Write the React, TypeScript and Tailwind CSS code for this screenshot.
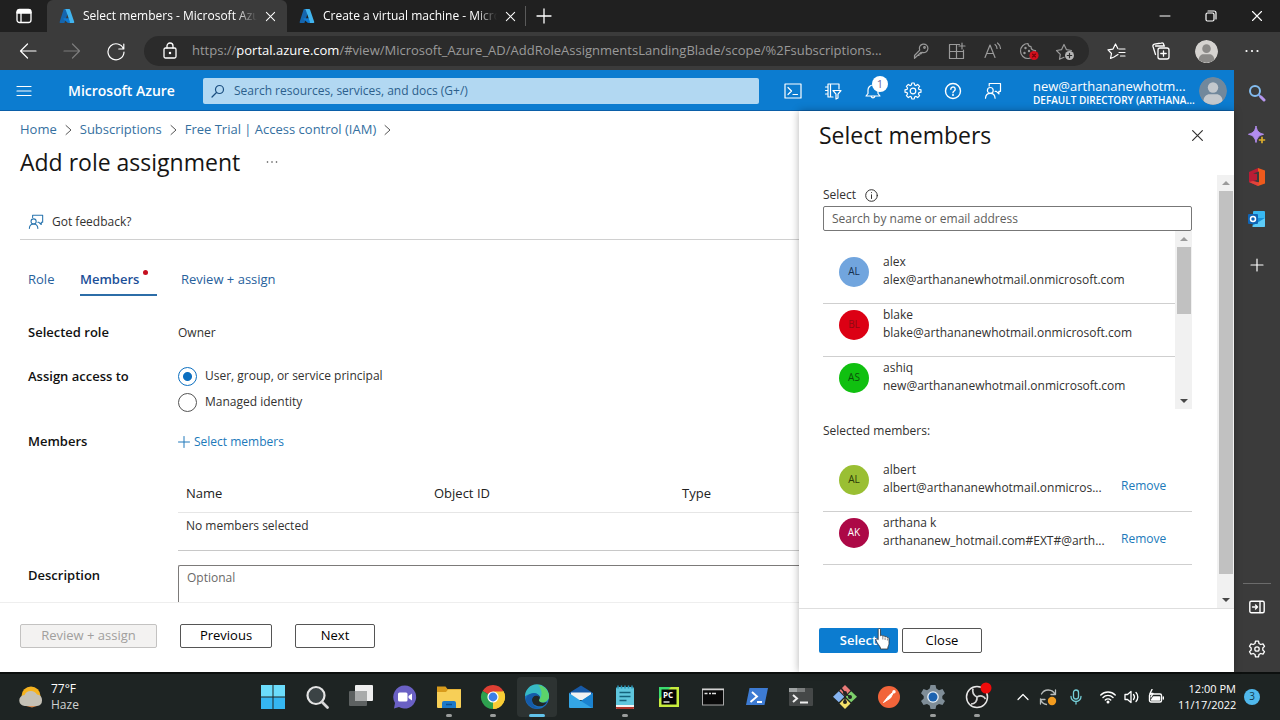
import type { ReactNode } from "react";

type IconProps = { children: ReactNode; className?: string; box?: string; sw?: number };

function Ic({ children, className = "size-5", box = "0 0 20 20", sw = 1.2 }: IconProps) {
  return (
    <svg className={`shrink-0 ${className}`} viewBox={box} fill="none" stroke="currentColor" strokeWidth={sw} strokeLinecap="round" strokeLinejoin="round" aria-hidden="true">
      {children}
    </svg>
  );
}

function AzureLogo() {
  return (
    <svg className="size-4 shrink-0" viewBox="0 0 16 16" aria-hidden="true">
      <path d="M5.4 1h4.8L5.4 15H1.6a.9.9 0 0 1-.9-1.2L4.6 1.6A.9.9 0 0 1 5.4 1z" fill="#1565ad" />
      <path d="M4.6 10.2h7l1.2 4.4L9 15 4.2 11z" fill="#0f78d0" />
      <path d="M5.8 1h4.4a.9.9 0 0 1 .8.6l4.2 12.2a.9.9 0 0 1-.9 1.2h-4.2a.9.9 0 0 0 .8-1.2L6.6 1.6A.9.9 0 0 0 5.8 1z" fill="#41b4ee" />
    </svg>
  );
}

function Cross({ className = "size-3" }: { className?: string }) {
  return (
    <Ic className={className} box="0 0 12 12" sw={1.1}>
      <path d="M1.5 1.5l9 9M10.5 1.5l-9 9" />
    </Ic>
  );
}

function Feedback({ className = "size-[18px]" }: { className?: string }) {
  return (
    <Ic className={className} box="0 0 18 18" sw={1.2}>
      <circle cx="6.3" cy="8.4" r="2.9" />
      <path d="M1.5 16.2c.2-3 2.1-4.9 4.8-4.9s4.600 1.900 4.800 4.900" />
      <path d="M5.200 4V1.500h11.300v7.800h-1.600v2.600L12.300 9.300h-1.200" />
    </Ic>
  );
}

function Person({ className, bg, fg }: { className: string; bg: string; fg: string }) {
  return (
    <svg className={`shrink-0 rounded-full ${className}`} viewBox="0 0 28 28" aria-hidden="true">
      <circle cx="14" cy="14" r="14" fill={bg} />
      <circle cx="14" cy="10.500" r="5.200" fill={fg} />
      <path d="M4.500 24c0-4.500 3-6.800 6-6.800h7c3 0 6 2.300 6 6.800a14 14 0 0 1-19 0z" fill={fg} />
    </svg>
  );
}

function Tri({ up = false, dark = false }: { up?: boolean; dark?: boolean }) {
  return (
    <svg className="size-2 shrink-0" viewBox="0 0 8 8" aria-hidden="true">
      <path d={up ? "M0 6l4-4 4 4z" : "M0 2l4 4 4-4z"} fill={dark ? "#484848" : "#9b9b9b"} />
    </svg>
  );
}

function BrowserTab({ title, active }: { title: string; active?: boolean }) {
  return (
    <div className={`flex h-8 items-center pl-3 ${active ? "w-60 rounded-t-md bg-[#3b3b3b]" : "w-[238px]"}`}>
      <AzureLogo />
      <span className="ml-2 w-[174px] overflow-hidden whitespace-nowrap text-xs text-white [mask-image:linear-gradient(to_right,black_88%,transparent)]">{title}</span>
      <button aria-label="Close tab" className="ml-2 text-white"><Cross className="size-[11px]" /></button>
    </div>
  );
}

function TabStrip() {
  return (
    <div className="flex h-8 shrink-0 items-center bg-[#202020] text-white">
      <button aria-label="Tab actions" className="flex w-[47px] justify-center">
        <Ic className="size-4" box="0 0 16 16" sw={1.300}>
          <rect x="1" y="1.500" width="14" height="13" rx="2.500" />
          <path d="M1.500 4.500h13M2 2.800h12" strokeWidth="2.400" />
          <path d="M5 5v9" />
        </Ic>
      </button>
      <BrowserTab title="Select members - Microsoft Azure" active />
      <BrowserTab title="Create a virtual machine - Microsoft Azure" />
      <div className="h-5 w-px bg-[#5a5a5a]" />
      <button aria-label="New tab" className="ml-[10px]">
        <Ic className="size-4" box="0 0 16 16" sw={1.300}><path d="M8 1v14M1 8h14" /></Ic>
      </button>
      <div className="ml-auto flex items-center gap-[34px] pr-[17px]">
        <button aria-label="Minimize"><Ic className="size-3" box="0 0 12 12" sw={1}><path d="M1 6h10" /></Ic></button>
        <button aria-label="Restore">
          <Ic className="size-3" box="0 0 12 12" sw={1.200}>
            <rect x="1" y="3" width="8" height="8" rx="1.500" />
            <path d="M3 1h6a2 2 0 0 1 2 2v6" />
          </Ic>
        </button>
        <button aria-label="Close window"><Cross /></button>
      </div>
    </div>
  );
}

function AddressBar() {
  return (
    <div className="flex h-[38px] shrink-0 items-center bg-[#3b3b3b] text-white">
      <div className="flex w-36 items-center gap-6 pl-[18px]">
        <button aria-label="Back"><Ic><path d="M18 10H2.500M9.500 3l-7 7 7 7" /></Ic></button>
        <button aria-label="Forward" className="text-[#7d7d7d]"><Ic><path d="M2 10h15.500M10.500 3l7 7-7 7" /></Ic></button>
        <button aria-label="Refresh"><Ic><path d="M17.500 8A8 8 0 1 0 18 11M17.800 3v5h-5" /></Ic></button>
      </div>
      <div className="flex h-[30px] min-w-0 flex-1 items-center rounded-full bg-[#2b2b2b] pr-[14px] pl-4 text-[#9a9a9a]">
        <Ic className="size-5 text-white" sw={1.300}>
          <rect x="4" y="7" width="12" height="10" rx="1.500" />
          <path d="M7 7V5a3 3 0 0 1 6 0v2" />
          <circle cx="10" cy="12" r=".6" fill="currentColor" />
        </Ic>
        <span className="ml-3 min-w-0 flex-1 truncate text-[13px]">
          https://<span className="text-white">portal.azure.com</span>/#view/Microsoft_Azure_AD/AddRoleAssignmentsLandingBlade/scope/%2Fsubscriptions...
        </span>
        <div className="ml-3 flex items-center gap-4">
          <Ic>
            <path d="M10.200 11.300l-6.700 6v-2.800l5.200-5.400a4.300 4.300 0 1 1 2.500 2.300L9.700 13H8v1.500H6.500" /><circle cx="13.500" cy="6.500" r=".8" />
          </Ic>
          <Ic><path d="M2.500 3.500h7v14h-7zM2.500 10.500h14v7h-14M16.500 10.500v7M9.500 3.500h3M16.500 10.500V9M15 2v6M12 5h6" /></Ic>
          <Ic><path d="M2 16.500L7 4l5 12.500M3.800 12.500h6.400M12 3.500c1.500 1.200 2 2.500 2 4M14.500 2c2.200 1.700 3 3.600 3 5.500" /></Ic>
          <Ic>
            <path d="M16.500 9.500A7.500 7.500 0 1 1 9 2.500c0 2 1 3 3 3 0 2.500 2 4 4.500 4z" />
            <circle cx="6.500" cy="7" r=".6" /><circle cx="5.500" cy="12" r=".6" /><circle cx="10" cy="10" r=".6" />
            <circle cx="15" cy="14.500" r="4.600" fill="#d0101c" stroke="none" />
            <path d="M13.600 13.100l2.800 2.800M16.400 13.100l-2.800 2.800" stroke="#6b0008" />
          </Ic>
          <Ic>
            <path d="M9 16.300l-4.500 2 .8-5L1.500 9.500l5-.8L9 3.500l2.500 5.200 5 .8" />
            <circle cx="14.500" cy="14.500" r="4.500" fill="#b5b5b5" stroke="none" />
            <path d="M14.500 12.300v4.400M12.300 14.500h4.400" stroke="#2b2b2b" />
          </Ic>
        </div>
      </div>
      <div className="flex items-center gap-6 pr-5 pl-[18px]">
        <Ic><path d="M11 13.500L7 16l-3.500 1.500L4.500 12.500 1 8.800l5-.7L8.500 3l2.300 4.500M12 8h6M12 11.500h6M13.500 15H18" /></Ic>
        <Ic sw={1.300}>
          <rect x="7" y="7" width="11" height="11" rx="2" />
          <path d="M12.500 9.800v5.400M9.800 12.500h5.400M4.500 13.500L2 5.500a2 2 0 0 1 1.400-2.400L10.500 2a2 2 0 0 1 2.300 1.500v.8M4.500 5h9" />
        </Ic>
        <Person className="size-[23px]" bg="#d5d3d0" fg="#8b8a88" />
        <button aria-label="Browser menu" className="ml-[2px]">
          <svg className="size-4" viewBox="0 0 16 16" fill="currentColor"><circle cx="2.500" cy="8" r="1.100" /><circle cx="8" cy="8" r="1.100" /><circle cx="13.500" cy="8" r="1.100" /></svg>
        </button>
      </div>
    </div>
  );
}

function AzureHeader() {
  return (
    <header className="flex h-[41px] shrink-0 items-center border-b border-[#0b5fa8] bg-[#0c7cd0] pt-[2px] text-white">
      <button aria-label="Show portal menu" className="ml-4"><Ic className="size-4" box="0 0 16 16" sw={1.200}><path d="M1 3.500h14M1 8h14M1 12.500h14" /></Ic></button>
      <a href="#" className="ml-9 w-[135px] text-sm font-semibold whitespace-nowrap">Microsoft Azure</a>
      <label className="flex h-[26px] min-w-0 flex-1 items-center gap-[9px] rounded-xs bg-[#b2d8f2] px-2 text-[#1b4f80]">
        <Ic className="size-[14px]" box="0 0 14 14"><circle cx="8.500" cy="5.500" r="4" /><path d="M5.500 8.500L1 13" /></Ic>
        <input aria-label="Search resources, services, and docs" placeholder="Search resources, services, and docs (G+/)" className="min-w-0 flex-1 bg-transparent text-xs outline-none placeholder:text-[#2c5f8c]" />
      </label>
      <div className="ml-[25px] flex items-center gap-[22px]">
        <button aria-label="Cloud Shell"><Ic className="size-[18px]" box="0 0 18 18"><rect x="1" y="2" width="16" height="14" /><path d="M4 5.500L7.500 9 4 12.500M9 12.500h4.500" /></Ic></button>
        <button aria-label="Directories and subscriptions"><Ic className="size-[18px]" box="0 0 18 18"><path d="M9 15H4V2h11v5M6.500 2v13M1.500 5H4M1.500 8.500H4M1.500 12H4M9 8.500h8l-3 3.700V16l-2 1v-4.800z" /></Ic></button>
        <button aria-label="Notifications" className="relative">
          <Ic className="size-[18px]" box="0 0 18 18"><path d="M2 14h14l-2-2.500V8A5 5 0 0 0 4 8v3.500zM7.200 14.500a1.900 1.900 0 0 0 3.600 0" /></Ic>
          <span className="absolute -top-[6px] left-2 flex size-4 items-center justify-center rounded-full bg-white text-[11px] text-[#70629a]">1</span>
        </button>
        <button aria-label="Settings">
          <Ic className="size-[18px]" box="0 0 18 18">
            <circle cx="9" cy="9" r="2.800" />
            <path d="M7.800 1h2.400l.4 2 1.400.6L13.700 2.400l1.900 1.900L14.400 6l.6 1.400 2 .4v2.400l-2 .4-.6 1.400 1.200 1.700-1.900 1.900-1.700-1.200-1.400.6-.4 2H7.800l-.4-2L6 14.400l-1.700 1.200-1.900-1.900L3.600 12 3 10.600l-2-.4V7.800l2-.4L3.600 6 2.400 4.300l1.900-1.900L6 3.600 7.400 3z" />
          </Ic>
        </button>
        <button aria-label="Help"><Ic className="size-[18px]" box="0 0 18 18" sw={1.400}><circle cx="9" cy="9" r="7.500" /><path d="M6.800 7.200a2.200 2.200 0 1 1 3.400 1.800c-.8.500-1.200.9-1.200 1.800" /><circle cx="9" cy="13" r=".4" /></Ic></button>
        <button aria-label="Feedback"><Feedback /></button>
      </div>
      <button className="ml-[31px] flex items-center gap-2 pr-[7px] text-left">
        <span className="w-[158px] pt-1 leading-[14px] whitespace-nowrap">
          <span className="block text-[13px]">new@arthananewhotm...</span>
          <span className="block text-[10px] font-semibold">DEFAULT DIRECTORY (ARTHANA...</span>
        </span>
        <Person className="size-7" bg="#71889c" fg="#c3c8cd" />
      </button>
    </header>
  );
}

function Breadcrumb() {
  const chevron = <Ic className="h-3 w-[7px] text-[#555]" box="0 0 7 12" sw={1}><path d="M1 1.500L6 6l-5 4.500" /></Ic>;
  return (
    <nav className="flex h-5 items-center gap-2 text-[13px] whitespace-nowrap text-[#35709f]">
      <a href="#">Home</a>{chevron}
      <a href="#">Subscriptions</a>{chevron}
      <a href="#">Free Trial | Access control (IAM)</a>{chevron}
    </nav>
  );
}

function MainArea() {
  return (
    <main className="flex min-w-0 flex-1 flex-col overflow-hidden text-xs text-[#323130]">
      <div className="min-h-0 flex-1 overflow-hidden pt-[9px] pl-5">
        <Breadcrumb />
        <div className="mt-1 flex h-9 items-center gap-6">
          <h1 className="text-[23px] font-medium whitespace-nowrap text-[#161514]">Add role assignment</h1>
          <button aria-label="More actions">
            <svg className="h-1 w-4" viewBox="0 0 16 4" fill="#444"><circle cx="3.500" cy="2" r=".8" /><circle cx="8" cy="2" r=".8" /><circle cx="12.500" cy="2" r=".8" /></svg>
          </button>
        </div>
        <div className="mt-6 flex h-9 items-center border-b border-[#d0d0d0] pl-2">
          <button className="flex items-center gap-2"><Feedback className="size-4 text-[#2874ae]" />Got feedback?</button>
        </div>
        <div role="tablist" className="mt-6 flex h-8 gap-6 pl-2 text-[13px] text-[#27619c]">
          <button role="tab" className="w-7 text-left">Role</button>
          <button role="tab" aria-selected="true" className="flex w-[77px] items-center border-b-2 border-[#2c6da8] pt-[2px] font-semibold text-[#1c4f98]">
            Members<span className="mb-4 ml-1 size-[5px] rounded-full bg-[#c50f1f]" />
          </button>
          <button role="tab">Review + assign</button>
        </div>
        <div className="flex flex-col pl-2">
          <div className="mt-[27px] flex h-5 items-center">
            <span className="w-[150px] text-[13px] font-semibold text-[#111]">Selected role</span>
            <span>Owner</span>
          </div>
          <fieldset className="mt-5 flex items-start">
            <legend className="float-left w-[150px] text-[13px] leading-[26px] font-semibold text-[#111]">Assign access to</legend>
            <div>
              {["User, group, or service principal", "Managed identity"].map((t, i) => (
                <label key={t} className="flex h-[26px] items-center gap-2">
                  <input type="radio" name="access" defaultChecked={i === 0} className="size-[19px] appearance-none rounded-full border border-[#555] bg-white checked:border-[#0c6fc0] checked:bg-[radial-gradient(circle,#0c6fc0_4px,transparent_5px)]" />
                  {t}
                </label>
              ))}
            </div>
          </fieldset>
          <div className="mt-[17px] flex h-5 items-center">
            <span className="w-[150px] text-[13px] font-semibold text-[#111]">Members</span>
            <a href="#" className="flex items-center gap-1 text-[#2079ba]">
              <Ic className="size-3" box="0 0 12 12" sw={1}><path d="M6 .5v11M.5 6h11" /></Ic>Select members
            </a>
          </div>
          <div className="mt-6 ml-[150px]">
            <table className="w-full table-fixed border-collapse text-left">
              <thead>
                <tr className="h-9 border-b border-[#e6e6e6] text-[13px] text-[#222]">
                  <th className="w-[248px] pl-2 font-medium">Name</th>
                  <th className="w-[248px] pl-2 font-medium">Object ID</th>
                  <th className="pl-2 font-medium">Type</th>
                </tr>
              </thead>
              <tbody>
                <tr className="h-[38px] border-b border-[#c8c8c8]"><td colSpan={3} className="pb-[10px] pl-2">No members selected</td></tr>
              </tbody>
            </table>
          </div>
          <div className="mt-[14px] flex items-start">
            <label htmlFor="description" className="w-[150px] text-[13px] leading-5 font-semibold text-[#111]">Description</label>
            <textarea id="description" placeholder="Optional" className="h-20 min-w-0 flex-1 resize-none rounded-l-xs border border-r-0 border-[#7c7a79] px-2 py-1 placeholder:text-[#6a6968]" />
          </div>
        </div>
      </div>
      <div className="flex h-[70px] shrink-0 items-center gap-[23px] border-t border-[#eeeeee] bg-white pb-1 pl-5 text-[13px] text-black">
        <button disabled className="h-6 w-[137px] rounded-xs border border-[#c3c2c1] bg-[#f3f2f1] text-[#a19f9d]">Review + assign</button>
        <button className="h-6 w-[92px] rounded-xs border border-[#555]">Previous</button>
        <button className="h-6 w-20 rounded-xs border border-[#555]">Next</button>
      </div>
    </main>
  );
}

type Member = { initials: string; name: string; mail: string; tone: string };

const candidates: Member[] = [
  { initials: "AL", name: "alex", mail: "alex@arthananewhotmail.onmicrosoft.com", tone: "bg-[#71a5de] text-[#15304f]" },
  { initials: "BL", name: "blake", mail: "blake@arthananewhotmail.onmicrosoft.com", tone: "bg-[#dc0014] text-[#8c0b12]" },
  { initials: "AS", name: "ashiq", mail: "new@arthananewhotmail.onmicrosoft.com", tone: "bg-[#10c010] text-[#0b500b]" },
];

const selected: Member[] = [
  { initials: "AL", name: "albert", mail: "albert@arthananewhotmail.onmicros...", tone: "bg-[#9abf33] text-[#2c3b08]" },
  { initials: "AK", name: "arthana k", mail: "arthananew_hotmail.com#EXT#@arth...", tone: "bg-[#ac0846] text-white" },
];

function MemberRow({ m, removable }: { m: Member; removable?: boolean }) {
  return (
    <li className="flex h-[53px] shrink-0 items-start border-b border-[#cfcfcf] pt-[6px] pl-4">
      <span className={`flex size-[30px] shrink-0 items-center justify-center rounded-full text-[10px] ${m.tone}`}>{m.initials}</span>
      <span className={`-mt-1 ml-[14px] leading-[18px] whitespace-nowrap ${removable ? "w-[238px]" : ""}`}>
        <span className="block">{m.name}</span>
        <span className="block">{m.mail}</span>
      </span>
      {removable && <a href="#" className="mt-3 leading-[18px] text-[#2079ba]">Remove</a>}
    </li>
  );
}

function MembersPanel() {
  return (
    <aside aria-label="Select members" className="z-10 flex w-[435px] shrink-0 flex-col bg-white text-xs text-[#323130] shadow-[0_0_8px_rgba(0,0,0,0.3)]">
      <div className="flex h-16 shrink-0 items-start justify-between pt-2 pr-[30px] pl-5">
        <h2 className="text-[23px] leading-8 font-medium text-[#161514]">Select members</h2>
        <button aria-label="Close panel" className="mt-[10px]"><Cross className="size-[13px]" /></button>
      </div>
      <div className="flex min-h-0 flex-1">
        <div className="min-w-0 flex-1 pr-[25px] pl-6">
          <label htmlFor="member-search" className="mt-[10px] flex h-5 items-center gap-[9px]">
            Select
            <Ic className="size-[13px]" box="0 0 13 13" sw={1}><circle cx="6.500" cy="6.500" r="5.800" /><path d="M6.500 5.800v3.700M6.500 3.600v.1" /></Ic>
          </label>
          <input id="member-search" placeholder="Search by name or email address" className="mt-[1px] h-[25px] w-full rounded-xs border border-[#777] px-2 placeholder:text-[#605e5c]" />
          <div className="flex h-[178px]">
            <ul className="min-w-0 flex-1 overflow-hidden pt-5">
              {candidates.map((m) => <MemberRow key={m.name} m={m} />)}
            </ul>
            <div aria-hidden="true" className="flex w-[17px] flex-col items-center justify-between bg-[#f1f1f1] py-1">
              <div className="flex flex-col items-center gap-1"><Tri up /><div className="h-[67px] w-[14px] bg-[#c1c1c1]" /></div>
              <Tri dark />
            </div>
          </div>
          <h3 className="mt-3 h-5 leading-5">Selected members:</h3>
          <ul className="pt-[18px]">
            {selected.map((m) => <MemberRow key={m.name} m={m} removable />)}
          </ul>
        </div>
        <div aria-hidden="true" className="flex w-[17px] flex-col items-center gap-1 bg-[#f1f1f1] py-1">
          <Tri up />
          <div className="w-[14px] flex-1 bg-[#c1c1c1]" />
          <div className="h-[14px]" />
          <Tri dark />
        </div>
      </div>
      <div className="flex h-16 shrink-0 items-center gap-1 border-t border-[#dedede] pl-5 text-[13px]">
        <button className="relative h-[25px] w-[79px] rounded-xs bg-[#0c7cd0] font-semibold text-white">
          Select
          <svg className="absolute top-0 left-14 h-[22px] w-[15px]" viewBox="0 0 15 22" aria-hidden="true">
            <path d="M3.200 1.500c0-1.300 2.200-1.300 2.300 0v6.300c.5-.8 2.100-.6 2.300.5.600-.8 2.100-.5 2.300.6.600-.7 2.100-.4 2.300.8.700-.4 1.600.1 1.600 1.200v4.600c0 1.700-1 2.500-1.200 4.500v1H5.500v-1C5 18 2 15.500 1 12.300c-.4-1.500 1.100-2 2.200-.6z" fill="#fff" stroke="#333" strokeWidth=".8" />
            <path d="M7.800 8.500v3M10.100 9.500v2.500M12.400 10.500v2" stroke="#555" strokeWidth=".7" />
          </svg>
        </button>
        <button className="h-[25px] w-20 rounded-xs border border-[#555] text-black">Close</button>
      </div>
    </aside>
  );
}

function EdgeSidebar() {
  return (
    <div className="flex w-[46px] shrink-0 flex-col items-center bg-[#3b3b3b] pt-[14px] pb-[14px] text-white">
      <div className="flex flex-col items-center gap-6">
        <Ic className="size-[18px]" box="0 0 18 18" sw={2}><circle cx="7" cy="7" r="5" stroke="#83bdf0" /><path d="M11 11l1.500 1.500" stroke="#83a5f0" /><path d="M13 13l3 3" stroke="#b796ee" strokeWidth="3" /></Ic>
        <svg className="size-[18px]" viewBox="0 0 18 18" aria-hidden="true">
          <path d="M8 0c.8 4.800 2.700 7 7.500 8.300C10.700 9.500 9 11.500 8 16.500 7 11.500 5.300 9.500.5 8.300 5.300 7 7.200 4.800 8 0z" fill="#b38df0" stroke="#b38df0" strokeWidth="1" strokeLinejoin="round" />
          <path d="M14 10.500v7M10.500 14h7" stroke="#3b3b3b" strokeWidth="3" />
          <path d="M14 10.800v6.400M10.800 14h6.400" stroke="#dcae2c" strokeWidth="1.700" />
        </svg>
        <svg className="size-[18px]" viewBox="0 0 18 18" aria-hidden="true">
          <path d="M1 4l9-4v18l-9-4z" fill="#ba1c35" /><path d="M10 0l7 2.500v13L10 18z" fill="#ee5a1c" /><path d="M5 5.500l6-2v11L5 13l4-1V6z" fill="#3b3b3b" /><path d="M1 14l4-1 6 1.500L10 18z" fill="#e0433c" />
        </svg>
        <svg className="size-[18px]" viewBox="0 0 18 18" aria-hidden="true">
          <rect x="5" y="1" width="12" height="10" rx="1" fill="#38b8f2" /><path d="M4 8h13v8a1 1 0 0 1-1 1H5z" fill="#1790d8" /><path d="M4 16L17 8v8a1 1 0 0 1-1 1H5z" fill="#5cccf8" /><rect x="0" y="4" width="10" height="10" rx="1" fill="#0f64b4" /><circle cx="5" cy="9" r="2.500" fill="none" stroke="#fff" strokeWidth="1.500" />
        </svg>
        <button aria-label="Add to sidebar" className="mt-[6px]"><Ic className="size-[14px]" box="0 0 14 14"><path d="M7 1v12M1 7h12" /></Ic></button>
      </div>
      <div className="mt-auto h-px w-7 bg-[#6b6b6b]" />
      <button aria-label="Hide sidebar" className="mt-[15px]"><Ic className="size-4" box="0 0 16 16" sw={1.400}><rect x=".8" y="2.200" width="14.400" height="11.600" rx="1.500" /><path d="M11 2.500v11M3.500 8h5M6.500 6l2 2-2 2" /></Ic></button>
      <button aria-label="Sidebar settings" className="mt-[25px]">
        <Ic className="size-[18px]" box="0 0 18 18" sw={1.300}>
          <circle cx="9" cy="9" r="2.200" />
          <path d="M7.500 1.200h3l.5 2.300 1.700 1 2.300-.7 1.500 2.600L14.800 8v2l1.700 1.600-1.500 2.600-2.300-.7-1.700 1-.5 2.300h-3L7 14.500l-1.700-1-2.300.7-1.500-2.600L3.200 10V8L1.500 6.400 3 3.800l2.300.7 1.700-1z" />
        </Ic>
      </button>
    </div>
  );
}

const taskIcons: { name: string; state?: "open" | "active"; art: ReactNode }[] = [
  { name: "Start", art: <><path d="M0 0h11.500v11.500H0zM12.500 0H24v11.500H12.500z" fill="#6bdcfb" /><path d="M0 12.500h11.500V24H0zM12.500 12.500H24V24H12.500z" fill="#35b6f1" /></> },
  { name: "Search", art: <><circle cx="11" cy="10.500" r="8.500" fill="#3b4345" stroke="#e4e4e4" strokeWidth="2.200" /><path d="M17 17l5.500 5.500" stroke="#d8d8d8" strokeWidth="2.800" strokeLinecap="round" /></> },
  { name: "Task view", art: <><rect x="6" y="0" width="18" height="16" rx="1" fill="#eeeeee" /><rect x="0" y="6" width="18" height="15" rx="1" fill="#5d6161" /><path d="M6 6h12v10H6z" fill="#a9abab" /></> },
  { name: "Chat", art: <><path d="M12 0.500a11.500 11.500 0 1 1-6 21.500L1 23.500l1-5.500A11.500 11.500 0 0 1 12 .5z" fill="#6a60c4" /><rect x="5" y="7.500" width="9.500" height="9" rx="1.500" fill="#fff" /><path d="M15.500 11l3.500-2.500v7L15.500 13z" fill="#fff" /></> },
  { name: "File Explorer", state: "open", art: <><path d="M0 1.500h8.500l2 2.500H24v6H0z" fill="#d89b1c" /><path d="M0 7h9l2-2.500h13V22a1 1 0 0 1-1 1H1a1 1 0 0 1-1-1z" fill="#f7cf57" /><path d="M5 23v-5a2 2 0 0 1 2-2h10a2 2 0 0 1 2 2v5z" fill="#1c79c9" /><path d="M9 19.500h6" stroke="#0d4f8f" strokeWidth="1.500" /></> },
  { name: "Chrome", state: "open", art: <><path d="M12 12L1.600 6A12 12 0 0 1 22.400 6z" fill="#de3f33" /><path d="M12 12l10.400-6A12 12 0 0 1 12 24z" fill="#f9cd35" /><path d="M12 12v12A12 12 0 0 1 1.600 6z" fill="#2ea14f" /><path d="M12 6.500h10.600a12 12 0 0 1-10.200 17.500L17 14z" fill="#f9cd35" /><circle cx="12" cy="12" r="5.600" fill="#fff" /><circle cx="12" cy="12" r="4.400" fill="#3d7fe8" /></> },
  { name: "Edge", state: "active", art: <><circle cx="12" cy="12" r="12" fill="#1c6fbd" /><path d="M0 11.500A12 12 0 0 1 24 11c0 4-3 6.500-7 6.500-2.500 0-3.500-1.300-3-2.500 2-2.500.5-6.500-4-6.500-5 0-9 1.500-10 3z" fill="#37b9c4" /><path d="M13 .1A12 12 0 0 1 24 11c0 4-3 6.500-7 6.500-2.500 0-3.500-1.300-3-2.500C18 11 17 4 13 .1z" fill="#5cd36a" /><path d="M7 15c0-3.500 2.500-5 5-5 1.700 0 2.800 1 2.800 2.600 0 1.200-.8 1.800-.8 2.700 0 1.500 1.800 2.500 4 2.500 1.800 0 3-.4 4-1-1.300 2.600-3.500 4.500-6.500 4.500C10.500 21.300 7 19 7 15z" fill="#222827" /><path d="M7 15c0 5 4 8 8.500 8A12 12 0 0 1 1 16c-.5-4 3-8 8-8 3 0 5 2 5 4-1-2-7-2-7 3z" fill="#155ba9" /></> },
  { name: "Mail", art: <><path d="M0 8l12-7.500L24 8v4H0z" fill="#1759a6" /><path d="M2 7.500h20V15H2z" fill="#f2f2f2" /><path d="M0 8l12 8 12-8v14a1 1 0 0 1-1 1H1a1 1 0 0 1-1-1z" fill="#34a5e5" /><path d="M12 16l12-8v14a1 1 0 0 1-1 1z" fill="#1b82cf" /></> },
  { name: "Notepad", state: "open", art: <><rect x="3" y="2" width="18" height="22" rx="1.500" fill="#5fc6dd" /><path d="M3 20h18v2.500a1.500 1.500 0 0 1-1.500 1.500h-15A1.500 1.500 0 0 1 3 22.500z" fill="#f4f4f4" /><path d="M3 22h18v.8a1.200 1.200 0 0 1-1.500 1.200h-15A1.200 1.200 0 0 1 3 22.800z" fill="#b2372c" /><path d="M6.500 7.500h11M6.500 11.500h11M6.500 15.500h7" stroke="#14617b" strokeWidth="1.300" /><path d="M5 .5v3M8.500.5v3M12 .5v3M15.500.5v3M19 .5v3" stroke="#2a93b5" strokeWidth="1.500" /></> },
  { name: "PyCharm", art: <><rect x="2" y="2" width="20" height="20" fill="#c7ec3e" /><path d="M2 2h12L2 14z" fill="#3cdc6f" /><rect x="4.500" y="4.500" width="15" height="15" fill="#050505" /><text x="6" y="12.500" fontSize="8" fontWeight="700" fill="#fff">PC</text><path d="M6.500 17h6" stroke="#fff" strokeWidth="1.300" /></> },
  { name: "Command Prompt", art: <><rect x="1.500" y="4" width="21" height="16" fill="#0a0a0a" stroke="#a9a9a9" /><path d="M1 4.500h22" stroke="#d2d2d2" strokeWidth="1.500" /><path d="M3.500 8.500h3M8 8.500h2M11 8.500h4" stroke="#e0e0e0" strokeWidth="1.400" /></> },
  { name: "PowerShell", art: <><path d="M4.500 3H23l-3.500 17H1z" fill="#3d7bd3" /><path d="M7 7l5 4.500-6.500 5.500M12 17h5" fill="none" stroke="#fff" strokeWidth="1.900" /></> },
  { name: "Terminal", art: <><rect x="0" y="3" width="24" height="18" rx="1" fill="#454848" /><path d="M0 3h8v4H0z" fill="#9fa3a3" /><path d="M8 3h8v4H8z" fill="#7a7d7d" /><path d="M4 10l4 3.500L4 17M11 17.500h8" fill="none" stroke="#eee" strokeWidth="2" /></> },
  { name: "Git", art: <><path d="M12 0l5.500 5.500L12 11 6.500 5.500z" fill="#e97a78" /><path d="M5.800 6.200l5.500 5.500-5.500 5.500L0 11.700z" fill="#86b4f0" /><path d="M18.200 6.200L24 11.700l-5.800 5.500-5.500-5.500z" fill="#7dd06b" /><path d="M12 13l5.500 5.500L12 24l-5.500-5.500z" fill="#f4e06a" /><path d="M8 3l4 5v9M12 8l5 4" stroke="#222" strokeWidth="1.500" fill="none" /><circle cx="12" cy="17" r="2" fill="#222" /><circle cx="12" cy="8" r="2" fill="#222" /><circle cx="17" cy="12" r="2" fill="#222" /></> },
  { name: "Postman", art: <><circle cx="12" cy="12" r="11" fill="#f2643a" /><path d="M6.500 17.500l5-6.500 5.500-4.500-3.500 6.500z" fill="#fff" stroke="#fff" strokeLinejoin="round" /><circle cx="17" cy="6.800" r="1.700" fill="#fff" /></> },
  { name: "Settings", state: "open", art: <><path d="M9.500 0h5l.8 3.600 2.700 1.600 3.500-1.200 2.500 4.300L21.300 11v2.500l2.700 2.400-2.500 4.200-3.500-1.200-2.700 1.600-.8 3.500h-5l-.8-3.500L6 18.900l-3.500 1.200L0 15.900l2.700-2.400V11L0 8.300 2.500 4 6 5.200l2.700-1.600z" fill="#7f8d97" /><circle cx="12" cy="12" r="5.800" fill="#e9f1f8" /><circle cx="12" cy="12" r="4.500" fill="#1b62b0" /></> },
  { name: "OBS Studio", state: "open", art: <><circle cx="12" cy="12" r="10.500" fill="#1d1d1d" stroke="#e8e8e8" strokeWidth="1.500" /><path d="M8 3.500c-1 4 1 7 4 8.500M12 12c3.500-2 7-1 8.500 2M12 12c.5 4-2 7-6 7" stroke="#d5d5d5" strokeWidth="1.700" fill="none" /><circle cx="21" cy="3" r="5.500" fill="#ee0b0b" /></> },
];

function Taskbar() {
  return (
    <footer className="flex h-12 shrink-0 items-center border-t-2 border-[#0c0f0e] bg-[#1e2423] text-xs text-white">
      <div className="flex w-[253px] items-center gap-2 pl-[19px]">
        <svg className="size-6" viewBox="0 0 24 24" aria-hidden="true">
          <circle cx="12" cy="11" r="9.500" fill="#f6b31f" /><path d="M6 21a5.500 5.500 0 0 1-.5-11A7 7 0 0 1 18 9.500a5.800 5.800 0 0 1 0 11.500z" fill="#c5c1b6" /><path d="M7 21h11l-5 1.500z" fill="#d98e54" />
        </svg>
        <div className="leading-4"><div>77°F</div><div className="text-[#cfd2d1]">Haze</div></div>
      </div>
      <div className="flex gap-1">
        {taskIcons.map((t) => (
          <button key={t.name} aria-label={t.name} className={`relative flex size-10 items-center justify-center rounded ${t.state === "active" ? "bg-[#2d3332]" : ""}`}>
            <svg className="size-6 overflow-visible" viewBox="0 0 24 24" aria-hidden="true">{t.art}</svg>
            {t.state && <span className={`absolute bottom-0 h-[3px] rounded-full ${t.state === "active" ? "w-4 bg-[#62c3ea]" : "w-[6px] bg-[#9a9d9c]"}`} />}
          </button>
        ))}
      </div>
      <div className="ml-auto flex items-center pr-5">
        <Ic className="size-3" box="0 0 12 12"><path d="M1 8.500l5-5 5 5" /></Ic>
        <Ic className="ml-[10px] size-[18px] overflow-visible" box="0 0 18 18" sw={1.300}>
          <path d="M16 6.500A7.500 7.500 0 0 0 2.500 6M16.500 2v4.500H12M1.500 11a7.500 7.500 0 0 0 6 5.500M1.500 16v-4.500H6" stroke="#b9bdbc" /><circle cx="13" cy="13" r="4.200" fill="#f39c1f" stroke="none" />
        </Ic>
        <Ic className="ml-[11px] size-4 text-[#75cfd8]" box="0 0 16 16" sw={1.300}><rect x="5.500" y="1" width="5" height="9" rx="2.500" /><path d="M3 7.500a5 5 0 0 0 10 0M8 12.500V15" /></Ic>
        <Ic className="ml-4 size-4" box="0 0 16 16" sw={1.400}><path d="M.8 6a10.300 10.300 0 0 1 14.400 0M3 8.500a7 7 0 0 1 10 0M5.300 11a3.800 3.800 0 0 1 5.400 0" /><circle cx="8" cy="13" r=".8" fill="currentColor" /></Ic>
        <Ic className="ml-2 size-4" box="0 0 16 16" sw={1.300}><path d="M1 5.500h2.500L7 2.500v11l-3.500-3H1zM9.500 5.500a4 4 0 0 1 0 5M12 3.500a6.500 6.500 0 0 1 0 9" /></Ic>
        <Ic className="ml-2 size-4" box="0 0 16 16" sw={1.400}><rect x="1.500" y="5" width="12" height="8" rx="1.500" /><path d="M15.300 8v2" /><path d="M5.500 8h6v3h-8z" fill="currentColor" /><path d="M4 .5L2 4.500h3L3 8" /></Ic>
        <div className="ml-[14px] w-[58px] text-right text-[11px] leading-4 whitespace-nowrap"><div>12:00 PM</div><div>11/17/2022</div></div>
        <span className="ml-2 flex size-4 items-center justify-center rounded-full bg-[#50b8ec] text-[10px] text-[#12384b]">3</span>
      </div>
    </footer>
  );
}

export default function App() {
  return (
    <div className="flex h-screen flex-col overflow-hidden bg-white font-['Open_Sans','Noto_Sans',sans-serif]">
      <TabStrip />
      <AddressBar />
      <div className="flex min-h-0 flex-1">
        <div className="flex min-w-0 flex-1 flex-col">
          <AzureHeader />
          <div className="flex min-h-0 flex-1">
            <MainArea />
            <MembersPanel />
          </div>
        </div>
        <EdgeSidebar />
      </div>
      <Taskbar />
    </div>
  );
}
